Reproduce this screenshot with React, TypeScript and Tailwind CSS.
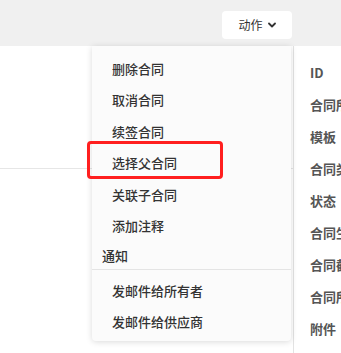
import React from "react";

const items1 = ["删除合同", "取消合同", "续签合同", "选择父合同", "关联子合同", "添加注释"];
const items2 = ["发邮件给所有者", "发邮件给供应商"];
const labels = ["ID", "合同所有者", "模板", "合同类型", "状态", "合同生效", "合同截止", "合同所属", "附件"];

export default function App() {
  return (
    <div
      className="relative w-[341px] h-[353px] overflow-hidden bg-white"
      style={{ fontFamily: '"Noto Sans CJK SC", "Noto Sans", sans-serif' }}
    >
      <div className="h-[46px] bg-[#f0f0f0] flex items-start justify-end pr-[49px] pt-[11px]">
        <button className="w-[70px] h-[28px] bg-white rounded-[4px] flex items-center justify-center gap-[5px] text-[12px] text-[#333]">
          <span>动作</span>
          <svg width="8" height="6" viewBox="0 0 8 6" fill="none">
            <path d="M1 1.5L4 4.5L7 1.5" stroke="#333" strokeWidth="1.8" strokeLinecap="round" strokeLinejoin="round" />
          </svg>
        </button>
      </div>
      <div className="flex h-[307px]">
        <div className="flex-1">
          <div className="h-[123px] border-b border-[#e6e6e6]" />
        </div>
        <div className="w-[48px] border-l border-[#e3e3e3] pl-[16px] pt-[11px] shrink-0 overflow-hidden">
          {labels.map((l) => (
            <div key={l} className="h-[32px] flex items-center whitespace-nowrap text-[13px] font-bold text-[#555]">
              {l}
            </div>
          ))}
        </div>
      </div>

      <div className="absolute left-[92px] top-[46px] w-[199px] h-[295px] bg-[#fbfbfb] rounded-b-[4px] shadow-[0_1px_6px_rgba(0,0,0,0.15)] pt-[6.5px]">
        {items1.map((t) => (
          <div key={t} className="h-[31.5px] flex items-center pl-[20px] text-[13px] font-medium text-[#333]">
            {t}
          </div>
        ))}
        <div className="h-[28px] flex items-center pl-[10px] pt-[2px] text-[13px] font-medium text-[#333] border-b border-[#e4e4e4]">
          通知
        </div>
        <div className="pt-[5px]">
          {items2.map((t) => (
            <div key={t} className="h-[31.5px] flex items-center pl-[20px] text-[13px] font-medium text-[#333]">
              {t}
            </div>
          ))}
        </div>
      </div>

      <div className="absolute left-[87px] top-[141px] w-[136px] h-[38px] border-[3px] border-[#ff1f1f] rounded-[4px]" />
    </div>
  );
}
